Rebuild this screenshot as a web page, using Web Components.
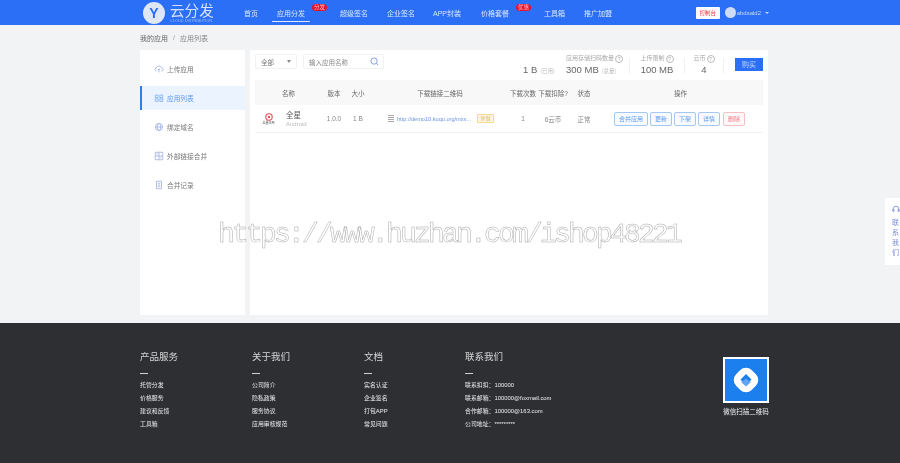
<!DOCTYPE html>
<html lang="zh">
<head>
<meta charset="utf-8">
<title>应用列表</title>
<style>
  html, body { margin: 0; height: 100%; overflow: hidden; }
  body { background: #f2f3f5; font: 7px "Liberation Sans", "Noto Sans CJK SC", sans-serif; color: #555; }
  y-topbar, y-content, y-footer, y-contact { filter: blur(.3px); }
</style>
</head>
<body>
<y-topbar></y-topbar>
<y-content>
  <y-sidebar slot="side"></y-sidebar>
  <y-main slot="main">
    <y-toolbar></y-toolbar>
    <y-app-table></y-app-table>
  </y-main>
</y-content>
<y-footer></y-footer>
<y-contact></y-contact>
<y-watermark>https://www.huzhan.com/ishop48221</y-watermark>

<script>
class YTopbar extends HTMLElement {
  constructor() {
    super();
    this.attachShadow({ mode: "open" });
    this.shadowRoot.innerHTML = `
      <style>
        :host { display: flex; align-items: center; height: 25px; background: #2b6ff6; padding-left: 143px; color: #fff; box-sizing: border-box; }
        .logo { display: flex; align-items: center; width: 101px; }
        .mark { width: 22px; height: 22px; border-radius: 50%; background: #dfe6f4; color: #2b6ff6; font: bold 14px/22px "Liberation Sans", sans-serif; text-align: center; }
        .words { margin-left: 5px; display: flex; flex-direction: column; padding-top: 2px; }
        .name { font-size: 14.5px; line-height: 15px; color: #d6e2fb; letter-spacing: .1px; }
        .sub { font: 3.9px/4px "Liberation Sans", sans-serif; color: #9fbdf7; white-space: nowrap; }
        nav { display: flex; align-items: stretch; height: 25px; font-size: 7px; color: #dbe6fc; }
        nav a { position: relative; display: flex; align-items: center; white-space: nowrap; }
        nav a.on::after { content: ""; position: absolute; left: -5px; right: -5px; bottom: 3px; height: 1px; background: #dfe8fc; }
        .badge { position: absolute; top: 4px; left: 100%; background: #e8112d; color: #ffb9c0; font-size: 5.5px; line-height: 7px; padding: 0 2px; border-radius: 4px; }
        .right { display: flex; align-items: center; margin-left: auto; margin-right: 131px; }
        .console { width: 24px; height: 12px; background: #fff; color: #e0393e; font-size: 5.5px; line-height: 12px; text-align: center; border-radius: 1px; }
        .avatar { width: 11px; height: 11px; border-radius: 50%; background: #cfdcf6; margin-left: 5px; }
        .user { margin-left: 1px; font-size: 6px; color: #c9dafb; }
        .caret { margin-left: 4px; width: 0; height: 0; border: 2px solid transparent; border-top: 2px solid #c9dafb; border-bottom: 0; }
      </style>
      <div class="logo">
        <div class="mark">Y</div>
        <div class="words"><span class="name">云分发</span><span class="sub">CLOUD DISTRIBUTION</span></div>
      </div>
      <nav>
        <a style="margin-right:19px">首页</a>
        <a class="on" style="margin-right:35px">应用分发<span class="badge" style="margin-left:7px">分发</span></a>
        <a style="margin-right:19px">超级签名</a>
        <a style="margin-right:18px">企业签名</a>
        <a style="margin-right:20px">APP封装</a>
        <a style="margin-right:35px">价格套餐<span class="badge" style="margin-left:7px">优惠</span></a>
        <a style="margin-right:19px">工具箱</a>
        <a>推广加盟</a>
      </nav>
      <div class="right">
        <div class="console">控制台</div>
        <div class="avatar"></div>
        <div class="user">abdsald2</div>
        <div class="caret"></div>
      </div>`;
  }
}

class YContent extends HTMLElement {
  constructor() {
    super();
    this.attachShadow({ mode: "open" });
    this.shadowRoot.innerHTML = `
      <style>
        :host { display: block; height: 298px; padding: 0 132px 0 140px; box-sizing: border-box; }
        .crumb { height: 25px; display: flex; align-items: center; font-size: 7px; color: #666; }
        .crumb i { font-style: normal; margin: 0 5px; color: #999; }
        .crumb span { color: #888; }
        .cols { display: flex; gap: 5px; height: 265px; }
      </style>
      <div class="crumb">我的应用<i>/</i><span>应用列表</span></div>
      <div class="cols"><slot name="side"></slot><slot name="main"></slot></div>`;
  }
}

class YSidebar extends HTMLElement {
  constructor() {
    super();
    this.attachShadow({ mode: "open" });
    const items = [
      ["上传应用", '<path d="M3 8.5a2.3 2.3 0 0 1 .3-4.5 3 3 0 0 1 5.6.4 2 2 0 0 1 0 4.1" fill="none"/><path d="M6 10V6M4.5 7.3 6 5.8l1.5 1.5" fill="none"/>'],
      ["应用列表", '<path d="M1.5 2.5h3.5v3h-3.5zM7 2.5h3.5v3H7zM1.5 7h3.5v3h-3.5zM7 7h3.5v3H7z" fill="none"/>'],
      ["绑定域名", '<circle cx="6" cy="6" r="4.3" fill="none"/><ellipse cx="6" cy="6" rx="2" ry="4.3" fill="none"/><path d="M1.7 6h8.6" fill="none"/>'],
      ["外部链接合并", '<path d="M1.5 1.5h9v9h-9zM6 1.5v9M1.5 6h9" fill="none"/><path d="M3 4l1.5-1M7.5 8.5l1.5-1" fill="none"/>'],
      ["合并记录", '<path d="M3 1.5h6v9H3zM4.5 4h3M4.5 6h3M4.5 8h3" fill="none"/>'],
    ];
    this.shadowRoot.innerHTML = `
      <style>
        :host { display: block; width: 105px; background: #fff; padding-top: 7px; box-sizing: border-box; }
        .item { display: flex; align-items: center; height: 24px; margin-bottom: 5px; padding-left: 14px; font-size: 6.7px; color: #777; box-sizing: border-box; }
        .item.on { background: #eaf3fe; color: #5a9bf0; border-left: 2px solid #2b7ff0; padding-left: 12px; }
        svg { width: 10px; height: 10px; margin-right: 3px; stroke: #a3b1e6; stroke-width: 1; }
        .item.on svg { stroke: #7fb0f2; }
      </style>
      ${items
        .map(
          ([t, p], i) =>
            `<div class="item${i == 1 ? " on" : ""}"><svg viewBox="0 0 12 12">${p}</svg>${t}</div>`
        )
        .join("")}`;
  }
}

class YMain extends HTMLElement {
  constructor() {
    super();
    this.attachShadow({ mode: "open" });
    this.shadowRoot.innerHTML = `
      <style>
        :host { display: block; width: 518px; height: 265px; background: #fff; padding: 0 5px; box-sizing: border-box; }
      </style>
      <slot></slot>`;
  }
}

class YToolbar extends HTMLElement {
  constructor() {
    super();
    this.attachShadow({ mode: "open" });
    this.shadowRoot.innerHTML = `
      <style>
        :host { display: flex; align-items: flex-start; height: 30px; position: relative; }
        .select { display: flex; align-items: center; justify-content: space-between; width: 42px; height: 15px; margin-top: 4px; padding: 0 5px; box-sizing: border-box; border: 1px solid #f1f2f4; border-radius: 2px; font-size: 6.5px; color: #777; }
        .select i { width: 0; height: 0; border: 2px solid transparent; border-top: 3px solid #888; border-bottom: 0; }
        .search { display: flex; align-items: center; justify-content: space-between; width: 81px; height: 15px; margin: 4px 0 0 6px; padding: 0 4px 0 5px; box-sizing: border-box; border: 1px solid #f1f2f4; border-radius: 2px; font-size: 6.5px; color: #888; }
        .search svg { width: 9px; height: 9px; stroke: #7d9ae0; fill: none; stroke-width: 1; }
        .stats { display: flex; margin-left: auto; align-items: flex-start; }
        .used { width: 43px; padding-top: 14px; white-space: nowrap; }
        .block { display: flex; flex-direction: column; align-items: center; white-space: nowrap; padding-top: 4px; height: 27px; box-sizing: border-box; }
        .label { font-size: 6px; line-height: 9px; color: #aaa; display: flex; align-items: center; }
        .q { display: inline-block; width: 6px; height: 6px; line-height: 6px; margin-left: 1px; border: 1px solid #bbb; border-radius: 50%; font: 5px/6px "Liberation Sans", sans-serif; text-align: center; color: #aaa; }
        .val { font: 9.5px/12px "Liberation Sans", sans-serif; color: #666; margin-top: 1px; }
        .used .val { display: inline; }
        small { font-size: 5.5px; color: #bbb; margin-left: 3px; font-family: "Noto Sans CJK SC", sans-serif; }
        .sep { width: 1px; height: 16px; background: #f1f1f3; margin-top: 8px; }
        .buy { width: 28px; height: 13px; margin: 8px 0 0 11px; background: #2b6ff6; color: #c5d7fb; font-size: 7px; line-height: 13px; text-align: center; }
      </style>
      <div class="select">全部<i></i></div>
      <div class="search">输入应用名称<svg viewBox="0 0 10 10"><circle cx="4.5" cy="4.5" r="3.5"/><path d="M7 7l2 2"/></svg></div>
      <div class="stats">
        <div class="used"><span class="val">1 B</span><small>(已用)</small></div>
        <div class="block" style="width:63px;align-items:flex-start">
          <span class="label">应用存储扫码数量<span class="q">?</span></span>
          <span class="val">300 MB<small>(总量)</small></span>
        </div>
        <div class="sep"></div>
        <div class="block" style="width:54px"><span class="label">上传限制<span class="q">?</span></span><span class="val">100 MB</span></div>
        <div class="sep"></div>
        <div class="block" style="width:38px"><span class="label">云币<span class="q">?</span></span><span class="val">4</span></div>
        <div class="sep"></div>
        <div class="buy">购买</div>
      </div>`;
  }
}

class YAppTable extends HTMLElement {
  constructor() {
    super();
    this.attachShadow({ mode: "open" });
    this.shadowRoot.innerHTML = `
      <style>
        :host { display: block; width: 508px; font-size: 6.5px; color: #777; }
        .row { display: grid; grid-template-columns: 67px 24px 24px 140px 26px 34px 28px 165px; align-items: center; text-align: center; white-space: nowrap; }
        .head { height: 25px; background: #f8f8f9; font-size: 6.5px; color: #666; }
        .body { height: 27px; background: #fff; border-bottom: 1px solid #f3f3f5; color: #888; }
        .app { display: flex; align-items: center; text-align: left; padding-left: 4px; }
        .icon { width: 19px; height: 20px; margin-right: 8px; display: flex; flex-direction: column; align-items: center; justify-content: center; }
        .icon svg { width: 8px; height: 8px; }
        .icon em { font: normal 3px/4px "Noto Sans CJK SC", sans-serif; color: #555; }
        .txt { padding-top: 2px; }
        .n { font-size: 7.5px; line-height: 9px; color: #555; }
        .os { font: 6px/8px "Liberation Sans", sans-serif; color: #bbb; }
        .link { display: flex; align-items: center; padding-left: 18px; }
        .link svg { width: 6px; height: 7px; stroke: #aaa; margin-right: 3px; flex: none; }
        .url { width: 75px; font: 5.6px "Liberation Sans", sans-serif; color: #6a93dc; text-align: left; }
        .copy { margin-left: 5px; width: 17px; box-sizing: border-box; height: 9px; line-height: 7px; font-size: 5px; color: #d8b45f; background: #fdf6e4; border: 1px solid #f2d98e; border-radius: 1px; }
        .ops { display: flex; gap: 2px; padding-left: 16px; }
        .btn { box-sizing: border-box; width: 22px; height: 14px; line-height: 12px; font-size: 6px; color: #5b98ea; background: #f7fbff; border: 1px solid #a3c8f2; border-radius: 2px; }
        .btn.wide { width: 34px; }
        .btn.del { color: #ec8089; background: #fff8f9; border-color: #f4c0c6; margin-left: 1px; }
      </style>
      <div class="row head"><span>名称</span><span>版本</span><span>大小</span><span>下载链接二维码</span><span>下载次数</span><span>下载扣除?</span><span>状态</span><span>操作</span></div>
      <div class="row body">
        <div class="app">
          <div class="icon"><svg viewBox="0 0 10 10"><circle cx="5" cy="5" r="4" fill="none" stroke="#e8505b" stroke-width="1.4"/><circle cx="5" cy="5" r="1.5" fill="#e8505b"/></svg><em>全星应用</em></div>
          <div class="txt"><div class="n">全星</div><div class="os">Android</div></div>
        </div>
        <span>1.0.0</span><span>1 B</span>
        <div class="link"><svg viewBox="0 0 6 7"><path d="M0 .5h6M0 2.5h6M0 4.5h6M0 6.5h6"/></svg><span class="url">http://demo10.kuqu.org/mxx...</span><span class="copy">复制</span></div>
        <span>1</span><span>6云币</span><span>正常</span>
        <div class="ops"><span class="btn wide">合并应用</span><span class="btn">更新</span><span class="btn">下架</span><span class="btn">详情</span><span class="btn del">删除</span></div>
      </div>`;
  }
}

class YFooter extends HTMLElement {
  constructor() {
    super();
    this.attachShadow({ mode: "open" });
    const col = (title, width, links) => `
      <div class="col" style="width:${width}px">
        <div class="t">${title}</div><div class="dash"></div>
        ${links.map((l) => `<div class="l">${l}</div>`).join("")}
      </div>`;
    this.shadowRoot.innerHTML = `
      <style>
        :host { display: flex; height: 140px; background: #2d2f33; padding: 27px 131px 0 140px; box-sizing: border-box; color: #eee; }
        .col { flex: none; }
        .t { font-size: 9.5px; line-height: 14px; color: #d5d5d5; }
        .dash { width: 8px; height: 1px; background: #cfcfcf; margin: 9px 0 5px; }
        .l { font-size: 5.9px; line-height: 13px; white-space: nowrap; }
        .qr { margin-left: auto; width: 46px; display: flex; flex-direction: column; align-items: center; padding-top: 7px; }
        .code { width: 46px; height: 46px; background: #1c7fee; border: 2px solid #fff; box-sizing: border-box; display: flex; align-items: center; justify-content: center; }
        .code svg { width: 26px; height: 26px; }
        .cap { font-size: 6.5px; line-height: 9px; margin-top: 4px; white-space: nowrap; }
      </style>
      ${col("产品服务", 112, ["托管分发", "价格服务", "建议和反馈", "工具箱"])}
      ${col("关于我们", 112, ["公司简介", "隐私政策", "服务协议", "应用审核规范"])}
      ${col("文档", 101, ["实名认证", "企业签名", "打包APP", "常见问题"])}
      ${col("联系我们", 150, ["联系扣扣：100000", "联系邮箱：100000@foxmail.com", "合作邮箱：100000@163.com", "公司地址：*********"])}
      <div class="qr">
        <div class="code"><svg viewBox="0 0 26 26"><rect x="2" y="2" width="22" height="22" rx="8" transform="rotate(45 13 13)" fill="#fff"/><path d="M13 7l5.5 5.5-2.5 2.5-3-2.5-3 2.5-2.5-2.5z" fill="#1c7fee"/><path d="M10 14l3-2.5 3 2.5 2 1-5 4.500-5-4.500z" fill="#5fa6f4"/></svg></div>
        <div class="cap">微信扫描二维码</div>
      </div>`;
  }
}

// floating tab on the right edge
class YContact extends HTMLElement {
  constructor() {
    super();
    this.attachShadow({ mode: "open" });
    this.shadowRoot.innerHTML = `
      <style>
        :host { position: absolute; right: 0; top: 198px; width: 15px; height: 67px; background: #fff; display: flex; flex-direction: column; align-items: center; padding: 7px 0 0 6px; box-sizing: border-box; color: #7a8bd8; font-size: 7px; line-height: 10px; }
        svg { width: 8px; height: 8px; stroke: #7a8bd8; fill: none; stroke-width: 1; margin-bottom: 5px; }
      </style>
      <svg viewBox="0 0 10 10"><path d="M1.5 6V5a3.5 3.5 0 0 1 7 0v1M1 5.5h1.5V8H1zM7.5 5.5H9V8H7.5z"/></svg>
      <span>联</span><span>系</span><span>我</span><span>们</span>`;
  }
}

class YWatermark extends HTMLElement {
  constructor() {
    super();
    this.attachShadow({ mode: "open" });
    this.shadowRoot.innerHTML = `
      <style>
        :host { position: absolute; left: 218px; top: 219px; font: 28px/32px "Liberation Mono", monospace; letter-spacing: -2.8px; color: transparent; -webkit-text-stroke: .5px #aaa; white-space: nowrap; pointer-events: none; filter: grayscale(1); }
      </style>
      <slot></slot>`;
  }
}

customElements.define("y-topbar", YTopbar);
customElements.define("y-content", YContent);
customElements.define("y-sidebar", YSidebar);
customElements.define("y-main", YMain);
customElements.define("y-toolbar", YToolbar);
customElements.define("y-app-table", YAppTable);
customElements.define("y-footer", YFooter);
customElements.define("y-contact", YContact);
customElements.define("y-watermark", YWatermark);
</script>
</body>
</html>
